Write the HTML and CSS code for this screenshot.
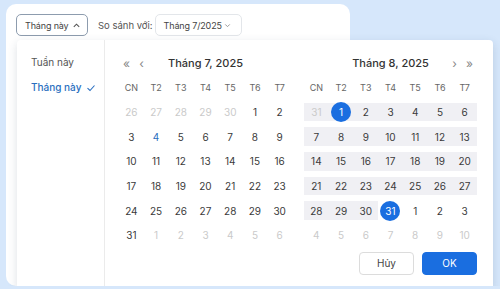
FILE: index.html
```html
<!DOCTYPE html>
<html lang="vi">
<head>
    <meta charset="UTF-8">
    <title>Chọn khoảng thời gian</title>
<link rel="stylesheet" href="styles.css">
</head>
<body>
<div class="card">
    <div class="toolbar">
        <button class="select active"><span>Tháng này</span>
            <svg width="9" height="9" viewBox="0 0 10 10"><path d="M2 6.5 5 3.5 8 6.5" fill="none" stroke="#555" stroke-width="1.2"/></svg>
        </button>
        <span class="label">So sánh với:</span>
        <button class="select compare"><span>Tháng 7/2025</span>
            <svg width="9" height="9" viewBox="0 0 10 10"><path d="M2.5 3.8 5 6.3 7.5 3.8" fill="none" stroke="#999" stroke-width="1.1"/></svg>
        </button>
    </div>

    <div class="panel">
        <ul class="presets">
            <li>Tuần này</li>
            <li class="on">Tháng này
                <svg width="10" height="10" viewBox="0 0 10 10"><path d="M1.5 5.2 4 7.5 8.5 2.5" fill="none" stroke="#2a6fc0" stroke-width="1.1"/></svg>
            </li>
        </ul>
        <div class="main">
            <div class="months">
                <div class="cal">
                    <div class="head">
                        <span class="nav">«</span><span class="nav">‹</span>
                        <span class="title">Tháng 7, 2025</span>
                        <span class="nav blank"></span><span class="nav blank"></span>
                    </div>
                    <div class="grid" id="july"></div>
                </div>
                <div class="cal">
                    <div class="head">
                        <span class="nav blank"></span><span class="nav blank"></span>
                        <span class="title">Tháng 8, 2025</span>
                        <span class="nav">›</span><span class="nav">»</span>
                    </div>
                    <div class="grid" id="aug"></div>
                </div>
            </div>
            <div class="footer">
                <button class="btn">Hủy</button>
                <button class="btn primary">OK</button>
            </div>
        </div>
    </div>
</div>
<script>
    const weekdays = ["CN", "T2", "T3", "T4", "T5", "T6", "T7"];

    // first: column of day 1, lastDark: last cell index drawn in normal colour
    function build(id, first, prevDays, total, opts) {
        const grid = document.getElementById(id);
        weekdays.forEach(w => {
            const el = document.createElement("span");
            el.className = "wd";
            el.textContent = w;
            grid.appendChild(el);
        });
        const lastDark = opts.lastDark || first + total - 1;
        for (let i = 0; i < 42; i++) {
            const el = document.createElement("span");
            el.className = "day";
            let n = i - first + 1;
            let inMonth = true;
            if (n < 1) { n = prevDays + n; inMonth = false; }
            else if (n > total) { n = n - total; inMonth = false; }
            if (i < first || i > lastDark) el.classList.add("out");
            if (opts.range && i >= opts.range[0] && i <= opts.range[1]) {
                el.classList.add("range");
            }
            if (inMonth && opts.today === n) el.classList.add("today");
            if (inMonth && opts.picked && opts.picked.includes(n)) el.classList.add("picked");
            const s = document.createElement("i");
            s.textContent = n;
            el.appendChild(s);
            grid.appendChild(el);
        }
    }

    build("july", 5, 30, 31, { today: 4 });
    build("aug", 1, 31, 31, { range: [0, 30], picked: [1, 31], lastDark: 34 });
</script>
</body>
</html>
```

FILE: styles.css
```css
* {
    box-sizing: border-box;
}
body {
    margin: 0;
    background: #d6e7fb;
    font-family: Inter, "Noto Sans", sans-serif;
    color: #333;
    overflow: hidden;
}
.card {
    position: relative;
    margin: 4px 0 0 6px;
    width: 344px;
    height: 282px;
    background: #fff;
    border-radius: 10px;
}
.toolbar {
    display: flex;
    align-items: center;
    padding: 10px 0 0 10px;
    gap: 10px;
}
.select {
    display: flex;
    align-items: center;
    justify-content: space-between;
    height: 22px;
    padding: 0 6px 0 8px;
    border: 1px solid #e3e6ea;
    border-radius: 5px;
    background: #fff;
    font-family: inherit;
    font-size: 9px;
    letter-spacing: -0.15px;
    color: #444;
    white-space: nowrap;
}
.select svg {
    flex-shrink: 0;
}
.select.active {
    width: 72px;
    border-color: #8d9cae;
}
.select.compare {
    width: 87px;
    padding-right: 9px;
}
.label {
    font-size: 9.5px;
    color: #555;
    margin-right: -8px;
}

/* dropdown */
.panel {
    position: absolute;
    top: 36px;
    left: 11px;
    width: 476px;
    height: 249px;
    background: #fff;
    border-radius: 4px;
    box-shadow: 0 3px 10px rgba(40, 60, 90, 0.16);
    display: flex;
}
.presets {
    list-style: none;
    margin: 0;
    padding: 10px 0 0 14px;
    width: 88px;
    border-right: 1px solid #ebebeb;
}
.presets li {
    height: 25px;
    line-height: 25px;
    font-size: 10px;
    color: #555;
}
.presets li.on {
    color: #2a6fc0;
    font-weight: 500;
    display: flex;
    align-items: center;
    gap: 5px;
}
.main {
    padding: 11px 15px 0 14px;
}
.months {
    display: flex;
    gap: 12px;
}
.cal {
    width: 173px;
}
.head {
    display: flex;
    align-items: center;
    height: 24px;
}
.nav {
    width: 15px;
    text-align: center;
    font-size: 12px;
    color: #888;
}
.title {
    flex: 1;
    text-align: center;
    font-size: 11px;
    font-weight: 500;
    color: #333;
}
.grid {
    display: grid;
    grid-template-columns: repeat(7, 1fr);
    grid-auto-rows: 24.7px;
}
.wd, .day {
    display: flex;
    align-items: center;
    justify-content: center;
    font-size: 9px;
    color: #666;
}
.day {
    font-size: 10px;
    color: #3a3a3a;
    position: relative;
}
.day i {
    font-style: normal;
    position: relative;
    z-index: 1;
    width: 20px;
    height: 20px;
    line-height: 20px;
    text-align: center;
    border-radius: 50%;
}
.day.out {
    color: #cacaca;
}
.day.today {
    color: #2a6fc0;
}
.day.range {
    background: linear-gradient(#fff 3px, #f0f0f4 3px, #f0f0f4 calc(100% - 3px), #fff calc(100% - 3px));
}
.day.picked i {
    background: #1a6ee0;
    color: #fff;
}
.footer {
    display: flex;
    justify-content: flex-end;
    gap: 8px;
    margin-top: 4px;
}
.btn {
    width: 55px;
    height: 23px;
    border: 1px solid #dcdcdc;
    border-radius: 4px;
    background: #fff;
    font-family: inherit;
    font-size: 10px;
    color: #444;
}
.btn.primary {
    background: #1a6ee0;
    border-color: #1a6ee0;
    color: #fff;
}
```
